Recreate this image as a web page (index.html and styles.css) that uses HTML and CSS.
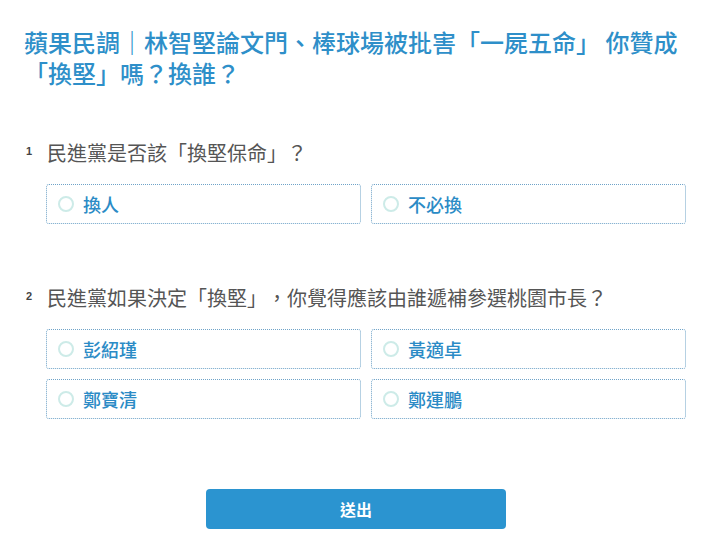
FILE: index.html
```html
<!DOCTYPE html>
<html lang="zh-Hant">
<head>
<meta charset="utf-8">
<link rel="stylesheet" href="styles.css">
</head>
<body>
<div class="page">
  <h1 class="title">蘋果民調｜林智堅論文門、棒球場被批害「一屍五命」 你贊成「換堅」嗎？換誰？</h1>

  <div class="question q1">
    <div class="qhead"><span class="num">1</span><span class="qtext">民進黨是否該「換堅保命」？</span></div>
    <div class="options">
      <label class="opt"><span class="radio"></span><span class="label">換人</span></label>
      <label class="opt"><span class="radio"></span><span class="label">不必換</span></label>
    </div>
  </div>

  <div class="question q2">
    <div class="qhead"><span class="num">2</span><span class="qtext">民進黨如果決定「換堅」，你覺得應該由誰遞補參選桃園市長？</span></div>
    <div class="options">
      <label class="opt"><span class="radio"></span><span class="label">彭紹瑾</span></label>
      <label class="opt"><span class="radio"></span><span class="label">黃適卓</span></label>
      <label class="opt"><span class="radio"></span><span class="label">鄭寶清</span></label>
      <label class="opt"><span class="radio"></span><span class="label">鄭運鵬</span></label>
    </div>
  </div>

  <div class="actions"><button class="submit">送出</button></div>
</div>
</body>
</html>
```
FILE: styles.css
```css
* { box-sizing: border-box; }
body {
  margin: 0;
  background: #fff;
  font-family: "Noto Sans CJK TC", "Noto Sans", sans-serif;
  text-spacing-trim: space-all;
}
.page {
  padding: 26px 25px 0 24px;
}
.title {
  margin: 0;
  font-size: 24px;
  line-height: 31px;
  font-weight: 500;
  color: #2e8fc9;
}
.q1 { margin-top: 55px; }
.q2 { margin-top: 64px; }
.qhead {
  display: flex;
  align-items: center;
  height: 20px;
}
.num {
  width: 23px;
  padding-left: 2px;
  font-family: "Liberation Sans", sans-serif;
  font-weight: 700;
  font-size: 11px;
  color: #444;
  align-self: flex-start;
  line-height: 14px;
  margin-top: 1px;
}
.qtext {
  font-size: 20px;
  font-weight: 400;
  color: #555;
  line-height: 20px;
}
.options {
  margin-top: 21px;
  margin-left: 22px;
  display: grid;
  grid-template-columns: 1fr 1fr;
  gap: 10px;
}
.opt {
  display: flex;
  align-items: center;
  height: 40px;
  border: 1px dotted #6fa3c8;
  border-radius: 3px;
  padding-left: 11px;
}
.radio {
  width: 16px;
  height: 16px;
  border: 2px solid #cdebe8;
  border-radius: 50%;
  margin-right: 9px;
}
.label {
  font-size: 18px;
  font-weight: 500;
  color: #2b8bc6;
  line-height: 20px;
}
.actions {
  margin-top: 70px;
  display: flex;
  justify-content: center;
  padding-left: 2px;
}
.submit {
  width: 300px;
  height: 40px;
  border: none;
  border-radius: 4px;
  background: #2b94d0;
  color: #fff;
  font-family: "Noto Sans CJK TC", sans-serif;
  font-size: 16px;
  font-weight: 700;
}
```
